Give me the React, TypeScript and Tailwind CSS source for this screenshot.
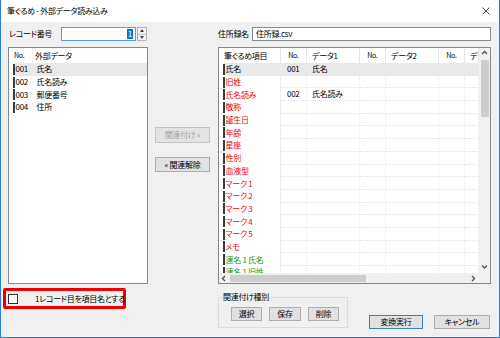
import React from "react";

const RED = "text-[#f00000]";
const GREEN = "text-[#1a961a]";

type Item = { name: string; color: string; no?: string; data?: string; sel?: boolean };

const items: Item[] = [
  { name: "氏名", color: "text-black", no: "001", data: "氏名", sel: true },
  { name: "旧姓", color: RED },
  { name: "氏名読み", color: RED, no: "002", data: "氏名読み" },
  { name: "敬称", color: RED },
  { name: "誕生日", color: RED },
  { name: "年齢", color: RED },
  { name: "星座", color: RED },
  { name: "性別", color: RED },
  { name: "血液型", color: RED },
  { name: "マーク 1", color: RED },
  { name: "マーク 2", color: RED },
  { name: "マーク 3", color: RED },
  { name: "マーク 4", color: RED },
  { name: "マーク 5", color: RED },
  { name: "メモ", color: RED },
  { name: "連名 1 氏名", color: GREEN },
  { name: "連名 1 旧姓", color: GREEN },
];

const sources = [
  { no: "001", name: "氏名", sel: true },
  { no: "002", name: "氏名読み" },
  { no: "003", name: "郵便番号" },
  { no: "004", name: "住所" },
];

const Chevron = ({ dir }: { dir: "up" | "down" | "left" | "right" }) => {
  const d = {
    up: "M1 4 L3.5 1.5 L6 4",
    down: "M1 1.5 L3.5 4 L6 1.5",
    left: "M4 1 L1.5 3.5 L4 6",
    right: "M2 1 L4.5 3.5 L2 6",
  }[dir];
  return (
    <svg width="7" height="7" viewBox="0 0 7 7" className="block">
      <path d={d} fill="none" stroke="#505050" strokeWidth="1.3" />
    </svg>
  );
};

const Btn = ({ label, className = "", disabled = false }: { label: string; className?: string; disabled?: boolean }) => (
  <div
    className={`flex items-center justify-center border whitespace-nowrap ${
      disabled ? "border-[#c4c4c4] bg-[#e3e3e3] text-[#a3a3a3]" : "border-[#adadad] bg-[#e1e1e1] text-black"
    } ${className}`}
  >
    {label}
  </div>
);

const cols = ["w-[26px]", "w-[53px]", "w-[26px]", "w-[53px]", "w-[26px]", "w-[14px]"];

export default function App() {
  return (
    <div className="w-[500px] h-[338px] flex flex-col bg-[#f0f0f0] border-x border-b border-[#2b7fd1] text-[8px] tracking-[-0.3px] leading-none text-black font-['Noto_Sans_CJK_JP',sans-serif] [font-feature-settings:'palt'] overflow-hidden">
      {/* title bar */}
      <div className="h-[22px] shrink-0 bg-white flex items-center justify-between pl-[6px] pr-[9px]">
        <span>筆ぐるめ - 外部データ読み込み</span>
        <svg width="8" height="8" viewBox="0 0 8 8">
          <path d="M0.5 0.5 L7.5 7.5 M7.5 0.5 L0.5 7.5" stroke="#333" strokeWidth="0.9" />
        </svg>
      </div>

      {/* record / file row */}
      <div className="mt-[5px] h-[14px] flex items-center shrink-0">
        <div className="w-[217px] flex items-center">
          <span className="ml-[8px] w-[52px]">レコード番号</span>
          <div className="w-[75px] h-[14px] border border-[#5d9ee0] bg-white flex items-center justify-end pr-[2px]">
            <span className="bg-[#0078d7] text-white px-[1px] h-[10px] flex items-center">1</span>
          </div>
          <div className="ml-[1px] w-[10px] h-[14px] flex flex-col border border-[#b4b4b4] bg-[#f4f4f4]">
            <div className="flex-1 flex items-center justify-center border-b border-[#c8c8c8]">
              <div className="w-0 h-0 border-x-[2.5px] border-x-transparent border-b-[3px] border-b-[#404040]" />
            </div>
            <div className="flex-1 flex items-center justify-center">
              <div className="w-0 h-0 border-x-[2.5px] border-x-transparent border-t-[3px] border-t-[#404040]" />
            </div>
          </div>
        </div>
        <div className="w-[273px] flex items-center">
          <span className="w-[34px]">住所録名</span>
          <div className="w-[239px] h-[14px] border border-[#8a8a8a] bg-white flex items-center pl-[3px]">住所録.csv</div>
        </div>
      </div>

      {/* main area */}
      <div className="mt-[6px] h-[237px] flex shrink-0">
        {/* source list */}
        <div className="ml-[7px] w-[140px] border border-[#828790] bg-white flex flex-col">
          <div className="h-[15px] flex items-center shrink-0">
            <span className="w-[23px] pl-[5px] text-[7px]">No.</span>
            <span className="h-full w-px bg-[#ececec]" />
            <span className="pl-[2px]">外部データ</span>
          </div>
          {sources.map((s) => (
            <div key={s.no} className="h-[12.7px] flex pl-[4px]">
              <div className={`flex-1 flex items-center ${s.sel ? "bg-[#e9e9e9]" : ""}`}>
                <span className="w-[1.5px] h-[11px] bg-[#3a3a3a] shrink-0" />
                <span className="ml-[1px] w-[19px]">{s.no}</span>
                <span className="ml-[2px]">{s.name}</span>
              </div>
            </div>
          ))}
        </div>

        {/* middle buttons */}
        <div className="ml-[7px] w-[55px] mr-[8px] flex flex-col pt-[80px] gap-[14px]">
          <Btn label="関連付け »" disabled className="h-[16px]" />
          <Btn label="« 関連解除" className="h-[15px]" />
        </div>

        {/* mapping grid */}
        <div className="w-[273px] border border-[#828790] bg-white flex flex-col">
          <div className="h-[225px] flex">
            <div className="w-[260px] flex flex-col overflow-hidden">
              <div className="h-[15px] flex shrink-0">
                <div className="w-[62px] flex items-center pl-[5px] border-r border-[#e6e6e6]">筆ぐるめ項目</div>
                {["No.", "データ1", "No.", "データ2", "No.", "データ3"].map((h, i) => (
                  <div
                    key={i}
                    className={`${cols[i]} shrink-0 flex items-center overflow-hidden whitespace-nowrap border-r border-[#e6e6e6] ${
                      h === "No." ? "justify-center text-[7px]" : "pl-[5px]"
                    }`}
                  >
                    {h}
                  </div>
                ))}
              </div>
              {items.map((it) => (
                <div key={it.name} className="h-[12.7px] flex shrink-0 pl-[4px]">
                  <div className={`flex-1 flex ${it.sel ? "bg-[#e9e9e9]" : ""}`}>
                    <div className="w-[58px] flex items-center border-r border-[#ececec]">
                      <span className="w-[1.5px] h-[11px] bg-[#3a3a3a] shrink-0" />
                      <span className={`ml-[1px] whitespace-nowrap ${it.color}`}>{it.name}</span>
                    </div>
                    {[it.no, it.data, "", "", "", ""].map((v, i) => (
                      <div
                        key={i}
                        className={`${cols[i]} shrink-0 flex items-center whitespace-nowrap border-r border-b border-r-[#ececec] border-b-[#e2e2e2] border-dotted ${
                          i % 2 === 0 ? "pl-[6px]" : "pl-[5px]"
                        }`}
                      >
                        {v}
                      </div>
                    ))}
                  </div>
                </div>
              ))}
            </div>
            <div className="w-[11px] bg-[#f0f0f0] flex flex-col items-center">
              <div className="h-[11px] flex items-center justify-center">
                <Chevron dir="up" />
              </div>
              <div className="mt-[1px] w-[8px] h-[57px] bg-[#cdcdcd]" />
              <div className="flex-1" />
              <div className="h-[11px] flex items-center justify-center">
                <Chevron dir="down" />
              </div>
            </div>
          </div>
          <div className="h-[10px] flex">
            <div className="w-[260px] bg-[#f0f0f0] flex items-center">
              <div className="w-[11px] flex justify-center">
                <Chevron dir="left" />
              </div>
              <div className="w-[136px] h-[7px] bg-[#cdcdcd]" />
              <div className="flex-1" />
              <div className="w-[11px] flex justify-center">
                <Chevron dir="right" />
              </div>
            </div>
            <div className="w-[11px] bg-[#f0f0f0]" />
          </div>
        </div>
      </div>

      {/* bottom row */}
      <div className="flex items-start">
        <div className="ml-[2px] mt-[4px] w-[123px] h-[21px] shrink-0 border-[3px] border-[#ee0000] rounded-[2px] flex items-center">
          <span className="ml-[2px] w-[10px] h-[10px] shrink-0 border border-[#333] bg-white" />
          <span className="ml-[17px] whitespace-nowrap">1レコード目を項目名とする</span>
        </div>
        <fieldset className="ml-[92px] mt-[7px] w-[130px] h-[37px] shrink-0 border border-[#dcdcdc] pl-[4px]">
          <legend className="px-0 leading-[12px]">関連付け種別</legend>
          <div className="flex gap-[7px] ml-[8px] mt-[4px]">
            <Btn label="選択" className="w-[31px] h-[14px]" />
            <Btn label="保存" className="w-[32px] h-[14px]" />
            <Btn label="削除" className="w-[31px] h-[14px]" />
          </div>
        </fieldset>
        <Btn label="変換実行" className="ml-[21px] mt-[31px] w-[54px] h-[14px] shrink-0 !border-[#3c7fb1]" />
        <Btn label="キャンセル" className="ml-[11px] mt-[31px] w-[56px] h-[14px] shrink-0" />
      </div>
    </div>
  );
}
